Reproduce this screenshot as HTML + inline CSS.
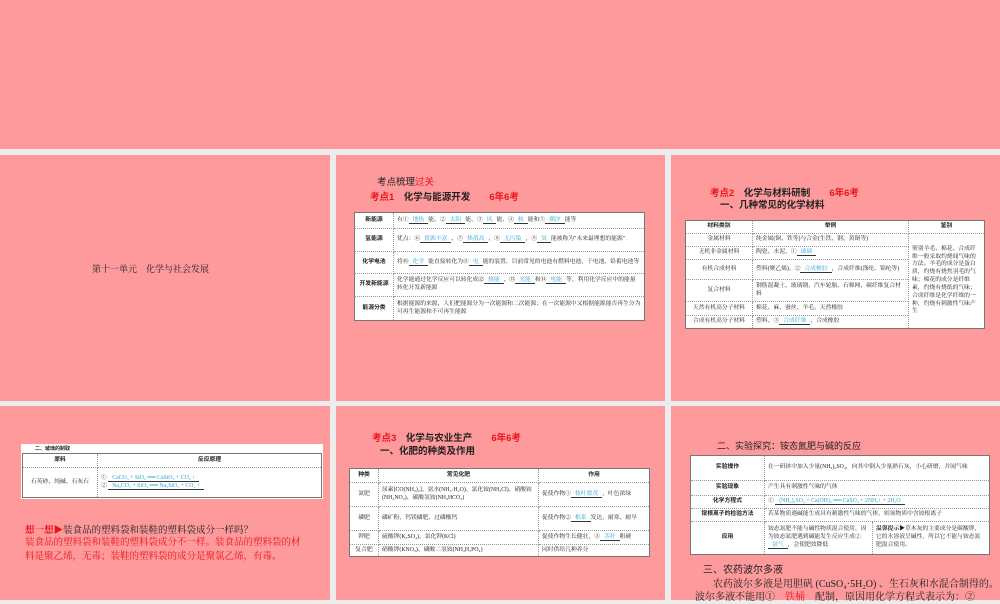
<!DOCTYPE html>
<html><head><meta charset="utf-8"><style>
*{margin:0;padding:0;box-sizing:border-box}
body{width:1000px;height:600px;background:#ececec;position:relative;overflow:hidden;font-family:"Liberation Serif","Noto Serif CJK SC","Noto Sans CJK SC",serif;color:#222}
.p{position:absolute;background:#fe9a9b}
.a{position:absolute;white-space:nowrap}
.t{font-family:"Liberation Sans","Noto Sans CJK SC",sans-serif;font-weight:bold}
.r{color:#e8141a}
table{position:absolute;border-collapse:collapse;background:#fff;border:1.5px solid #777;font-size:5.8px;line-height:1.35}
td{border:1px dotted #999;padding:1px 3px;vertical-align:middle}
td.h{text-align:center;font-weight:bold;font-family:"Liberation Sans","Noto Sans CJK SC",sans-serif}
td.c{text-align:center}
.b{color:#29a3d6;border-bottom:0.7px solid #333;padding:0 4px}
</style></head><body>
<div class="p" style="left:0;top:0;width:1000px;height:149px"></div>
<div class="p" style="left:0;top:155px;width:330px;height:246px"></div>
<div class="p" style="left:336px;top:155px;width:329px;height:246px"></div>
<div class="p" style="left:671px;top:155px;width:329px;height:246px"></div>
<div class="p" style="left:0;top:406px;width:330px;height:194px"></div>
<div class="p" style="left:336px;top:406px;width:329px;height:194px"></div>
<div class="p" style="left:671px;top:406px;width:329px;height:194px"></div>

<div class="a" style="left:92px;top:262px;font-size:9px">第十一单元　化学与社会发展</div>

<div class="a t" style="left:377px;top:174px;font-size:9.5px;font-weight:normal">考点梳理<span class="r">过关</span></div>
<div class="a t" style="left:370px;top:189px;font-size:9.5px"><span class="r">考点1</span>　化学与能源开发　　<span class="r">6年6考</span></div>
<table style="left:354px;top:212px;width:291px;height:109px">
<tr style="height:16px"><td class="h" style="width:39px">新能源</td><td>有①<span class="b">地热</span>能、②<span class="b">太阳</span>能、③<span class="b">风</span>能、④<span class="b">核</span>能和⑤<span class="b">潮汐</span>能等</td></tr>
<tr style="height:23px"><td class="h">氢能源</td><td>优点：⑥<span class="b">资源丰富</span>、⑦<span class="b">热值高</span>、⑧<span class="b">无污染</span>，⑨<span class="b">氢</span>能被称为"未来最理想的能源"</td></tr>
<tr style="height:22px"><td class="h">化学电池</td><td>将⑩<span class="b">化学</span>能直接转化为⑪<span class="b">电</span>能的装置，目前常见的电池有燃料电池、干电池、铅蓄电池等</td></tr>
<tr style="height:23px"><td class="h">开发新能源</td><td>化学能通过化学反应可以转化成⑫<span class="b">热能</span>、⑬<span class="b">光能</span>和⑭<span class="b">电能</span>等，利用化学反应中的能量转化开发新能源</td></tr>
<tr><td class="h">能源分类</td><td>根据能源的来源，人们把能源分为一次能源和二次能源；在一次能源中又根据能源能否再生分为可再生能源和不可再生能源</td></tr>
</table>

<div class="a t" style="left:710px;top:185px;font-size:9.5px"><span class="r">考点2</span>　化学与材料研制　　<span class="r">6年6考</span></div>
<div class="a t" style="left:720px;top:197px;font-size:9.5px">一、几种常见的化学材料</div>
<table style="left:685px;top:220px;width:300px;height:109px">
<tr style="height:13px"><td class="h" style="width:67px">材料类别</td><td class="h" style="width:156px">举例</td><td class="h">鉴别</td></tr>
<tr style="height:13px"><td class="c">金属材料</td><td>纯金属(铜、铁等)与合金(生铁、钢、黄铜等)</td><td rowspan="6">鉴别羊毛、棉花、合成纤维一般采取灼烧闻气味的方法。羊毛的成分是蛋白质，灼烧有烧焦羽毛的气味；棉花的成分是纤维素，灼烧有烧纸的气味；合成纤维是化学纤维的一种，灼烧有刺激性气味产生</td></tr>
<tr style="height:13px"><td class="c">无机非金属材料</td><td>陶瓷、水泥、①<span class="b">玻璃</span></td></tr>
<tr style="height:20px"><td class="c">有机合成材料</td><td>塑料(聚乙烯)、②<span class="b">合成橡胶</span>，合成纤维(涤纶、锦纶等)</td></tr>
<tr style="height:22px"><td class="c">复合材料</td><td>钢筋混凝土、玻璃钢、汽车轮胎、石棉网、碳纤维复合材料</td></tr>
<tr style="height:14px"><td class="c">天然有机高分子材料</td><td>棉花、麻、蚕丝、羊毛、天然橡胶</td></tr>
<tr><td class="c">合成有机高分子材料</td><td>塑料、③<span class="b">合成纤维</span>，合成橡胶</td></tr>
</table>

<div style="position:absolute;left:21px;top:444px;width:302px;height:55px;background:#fff"></div>
<div class="a t" style="left:35px;top:445px;font-size:5px">二、玻璃的制取</div>
<table style="left:22px;top:453px;width:300px;height:45px">
<tr style="height:14px"><td class="h" style="width:75px">原料</td><td class="h">反应原理</td></tr>
<tr><td class="c">石英砂、纯碱、石灰石</td><td>① <span class="b">CaCO₃ + SiO₂ ══ CaSiO₃ + CO₂ ↑</span><br>② <span class="b">Na₂CO₃ + SiO₂ ══ Na₂SiO₃ + CO₂ ↑</span></td></tr>
</table>
<div class="a" style="left:25px;top:522px;font-size:9.5px"><b class="r">想一想▶</b>装食品的塑料袋和装鞋的塑料袋成分一样吗？</div>
<div class="a r" style="left:25px;top:536px;font-size:9.5px;line-height:14px">装食品的塑料袋和装鞋的塑料袋成分不一样。装食品的塑料袋的材<br>料是聚乙烯，无毒；装鞋的塑料袋的成分是聚氯乙烯，有毒。</div>

<div class="a t" style="left:372px;top:430px;font-size:9.5px"><span class="r">考点3</span>　化学与农业生产　　<span class="r">6年6考</span></div>
<div class="a t" style="left:380px;top:443px;font-size:9.5px">一、化肥的种类及作用</div>
<table style="left:349px;top:468px;width:301px;height:89px">
<tr style="height:14px"><td class="h" style="width:29px">种类</td><td class="h" style="width:160px">常见化肥</td><td class="h">作用</td></tr>
<tr style="height:24px"><td class="c">氮肥</td><td>尿素[CO(NH₂)₂]、氨水(NH₃·H₂O)、氯化铵(NH₄Cl)、硝酸铵(NH₄NO₃)、碳酸氢铵(NH₄HCO₃)</td><td>促使作物①<span class="b">枝叶繁茂</span>，叶色浓绿</td></tr>
<tr style="height:24px"><td class="c">磷肥</td><td>磷矿粉、钙镁磷肥、过磷酸钙</td><td>促使作物②<span class="b">根系</span>发达，耐寒、耐旱</td></tr>
<tr style="height:14px"><td class="c">钾肥</td><td>硫酸钾(K₂SO₄)、氯化钾(KCl)</td><td>促使作物生长健壮，③<span class="b">茎秆</span>粗硬</td></tr>
<tr><td class="c">复合肥</td><td>硝酸钾(KNO₃)、磷酸二氢铵(NH₄H₂PO₄)</td><td>同时供给几种养分</td></tr>
</table>

<div class="a t" style="left:717px;top:439px;font-size:9px;font-weight:normal">二、实验探究：铵态氮肥与碱的反应</div>
<table style="left:690px;top:455px;width:300px;height:100px">
<tr style="height:25px"><td class="h" style="width:74px">实验操作</td><td colspan="2">在一研钵中加入少量(NH₄)₂SO₄，向其中倒入少量熟石灰，小心研磨，并闻气味</td></tr>
<tr style="height:15px"><td class="h">实验现象</td><td colspan="2">产生具有刺激性气味的气体</td></tr>
<tr style="height:13px"><td class="h">化学方程式</td><td colspan="2">① <span class="b">(NH₄)₂SO₄ + Ca(OH)₂ ══ CaSO₄ + 2NH₃↑ + 2H₂O</span></td></tr>
<tr style="height:13px"><td class="h">铵根离子的检验方法</td><td colspan="2">若某物质遇碱能生成具有刺激性气味的气体，则该物质中含铵根离子</td></tr>
<tr><td class="h">应用</td><td style="width:108px">铵态氮肥不能与碱性物质混合使用，因为铵态氮肥遇到碱能发生反应生成②<span class="b">氨气</span>，会使肥效降低</td><td><b>温馨提示▶</b>草木灰的主要成分是碳酸钾，它的水溶液呈碱性，所以它不能与铵态氮肥混合使用。</td></tr>
</table>
<div class="a t" style="left:703px;top:561px;font-size:10px;font-weight:normal">三、农药波尔多液</div>
<div class="a" style="left:703px;top:578px;font-size:10px;line-height:13px">　农药波尔多液是用胆矾 (CuSO₄·5H₂O) 、生石灰和水混合制得的。<br><span style="margin-left:-8px">波尔多液不能用①　<span class="r">铁桶</span>　配制，原因用化学方程式表示为：②</span></div>
</body></html>
